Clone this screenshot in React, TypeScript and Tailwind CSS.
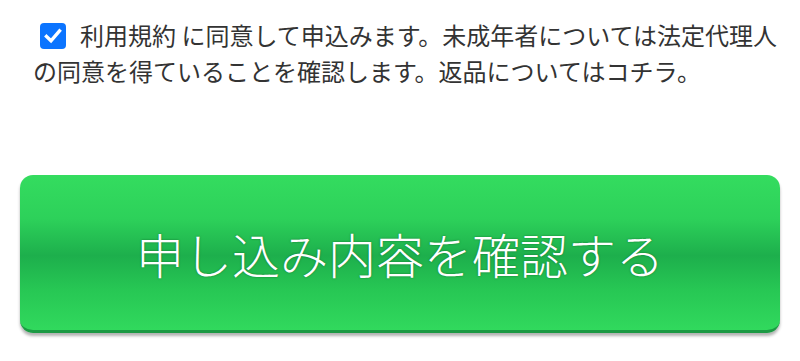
import React from "react";

export default function App() {
  return (
    <div
      className="w-[800px] h-[361px] bg-white overflow-hidden"
      style={{ fontFamily: '"Noto Sans CJK JP", "Noto Sans", sans-serif' }}
    >
      <div className="pt-[17px] pl-[33px] pr-[10px] text-[24px] leading-[36px] text-[#333333]">
        <label className="inline">
          <span className="inline-flex align-middle ml-[7px] mr-[14px] -mt-[4px] w-[26px] h-[26px] rounded-[4px] bg-[#0b74ff] items-center justify-center">
            <svg width="20" height="20" viewBox="0 0 20 20">
              <path
                d="M3.5 10.5 L8 14.8 L16.5 5"
                fill="none"
                stroke="white"
                strokeWidth="3.4"
                strokeLinecap="square"
                strokeLinejoin="miter"
              />
            </svg>
          </span>
          利用規約 に同意して申込みます。未成年者については法定代理人の同意を得ていることを確認します。返品についてはコチラ。
        </label>
      </div>
      <div className="mt-[86px] px-[20px]">
        <button
          className="w-[760px] h-[158px] rounded-[13px] flex items-center justify-center text-white text-[48px] font-light border-b-[3px] border-[#1c9a44] shadow-[0_3px_3px_rgba(0,0,0,0.3)]"
          style={{
            background:
              "linear-gradient(to bottom, #34dc5f 0%, #2dd15a 28%, #1daf4c 52%, #27c754 74%, #31d95d 100%)",
            textShadow: "0 0 2px rgba(0,60,20,0.55)",
          }}
        >
          申し込み内容を確認する
        </button>
      </div>
    </div>
  );
}
